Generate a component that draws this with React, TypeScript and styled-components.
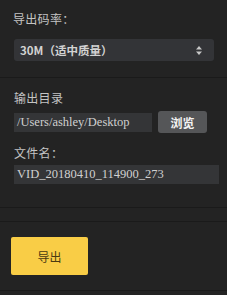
import React from "react";
import styled, { createGlobalStyle } from "styled-components";

const Global = createGlobalStyle`
  html, body { margin: 0; padding: 0; background: #232323; }
  body { font-family: "Noto Sans CJK SC", "Noto Sans", sans-serif; }
`;

const Panel = styled.div`
  width: 227px;
  height: 295px;
  background: #232323;
  display: flex;
  flex-direction: column;
  overflow: hidden;
`;

const Section = styled.div<{ $pad: string; $h: number }>`
  padding: ${(p) => p.$pad};
  height: ${(p) => p.$h}px;
  box-sizing: border-box;
  border-bottom: 1px solid #1a1a1a;
  display: flex;
  flex-direction: column;
`;

const Label = styled.div<{ $mb: number }>`
  font-size: 12px;
  line-height: 16px;
  letter-spacing: 0.3px;
  color: #c4c4c4;
  margin-bottom: ${(p) => p.$mb}px;
`;

const Select = styled.div`
  width: 200px;
  height: 22px;
  margin-left: 14px;
  background: #333437;
  border-radius: 3px;
  display: flex;
  align-items: center;
  justify-content: space-between;
  padding: 0 12px 0 6px;
  box-sizing: border-box;
  font-size: 11.5px;
  font-weight: 700;
  color: #d2d2d2;
`;

const Row = styled.div`
  display: flex;
  align-items: center;
  gap: 6px;
`;

const Field = styled.div<{ $w: number }>`
  width: ${(p) => p.$w}px;
  height: 19px;
  background: #343537;
  box-sizing: border-box;
  padding: 0 4px 0 3px;
  font-family: "Liberation Serif", "Times New Roman", serif;
  font-size: 12.5px;
  line-height: 19px;
  color: #d0d0d0;
  white-space: nowrap;
  overflow: hidden;
`;

const Browse = styled.div`
  width: 49px;
  height: 22px;
  background: #555658;
  border-radius: 3px;
  color: #f2f2f2;
  font-size: 12px;
  font-weight: 700;
  display: flex;
  align-items: center;
  justify-content: center;
`;

const ExportBtn = styled.div`
  width: 77px;
  height: 38px;
  background: #f9cd46;
  border-radius: 2px;
  color: #4a3a12;
  font-size: 12px;
  display: flex;
  align-items: center;
  justify-content: center;
`;

const Spacer = styled.div`
  height: 13px;
  border-bottom: 1px solid #1a1a1a;
  box-sizing: content-box;
`;

const Arrows = () => (
  <svg width="6" height="9" viewBox="0 0 6 9">
    <path d="M3 0 L6 3.5 L0 3.5 Z" fill="#c8c8c8" />
    <path d="M3 9 L6 5.5 L0 5.5 Z" fill="#c8c8c8" />
  </svg>
);

export default function App() {
  return (
    <>
      <Global />
      <Panel>
        <Section $pad="11px 0 0 0" $h={78}>
          <Label $mb={12} style={{ marginLeft: 13 }}>导出码率：</Label>
          <Select>
            <span>30M（适中质量）</span>
            <Arrows />
          </Select>
        </Section>
        <Section $pad="12px 0 0 14px" $h={130}>
          <Label $mb={5}>输出目录</Label>
          <Row>
            <Field $w={138}>/Users/ashley/Desktop</Field>
            <Browse>浏览</Browse>
          </Row>
          <Label $mb={4} style={{ marginTop: 12 }}>文件名：</Label>
          <Field $w={205}>VID_20180410_114900_273</Field>
        </Section>
        <Spacer />
        <Section $pad="15px 0 0 11px" $h={69}>
          <ExportBtn>导出</ExportBtn>
        </Section>
      </Panel>
    </>
  );
}
